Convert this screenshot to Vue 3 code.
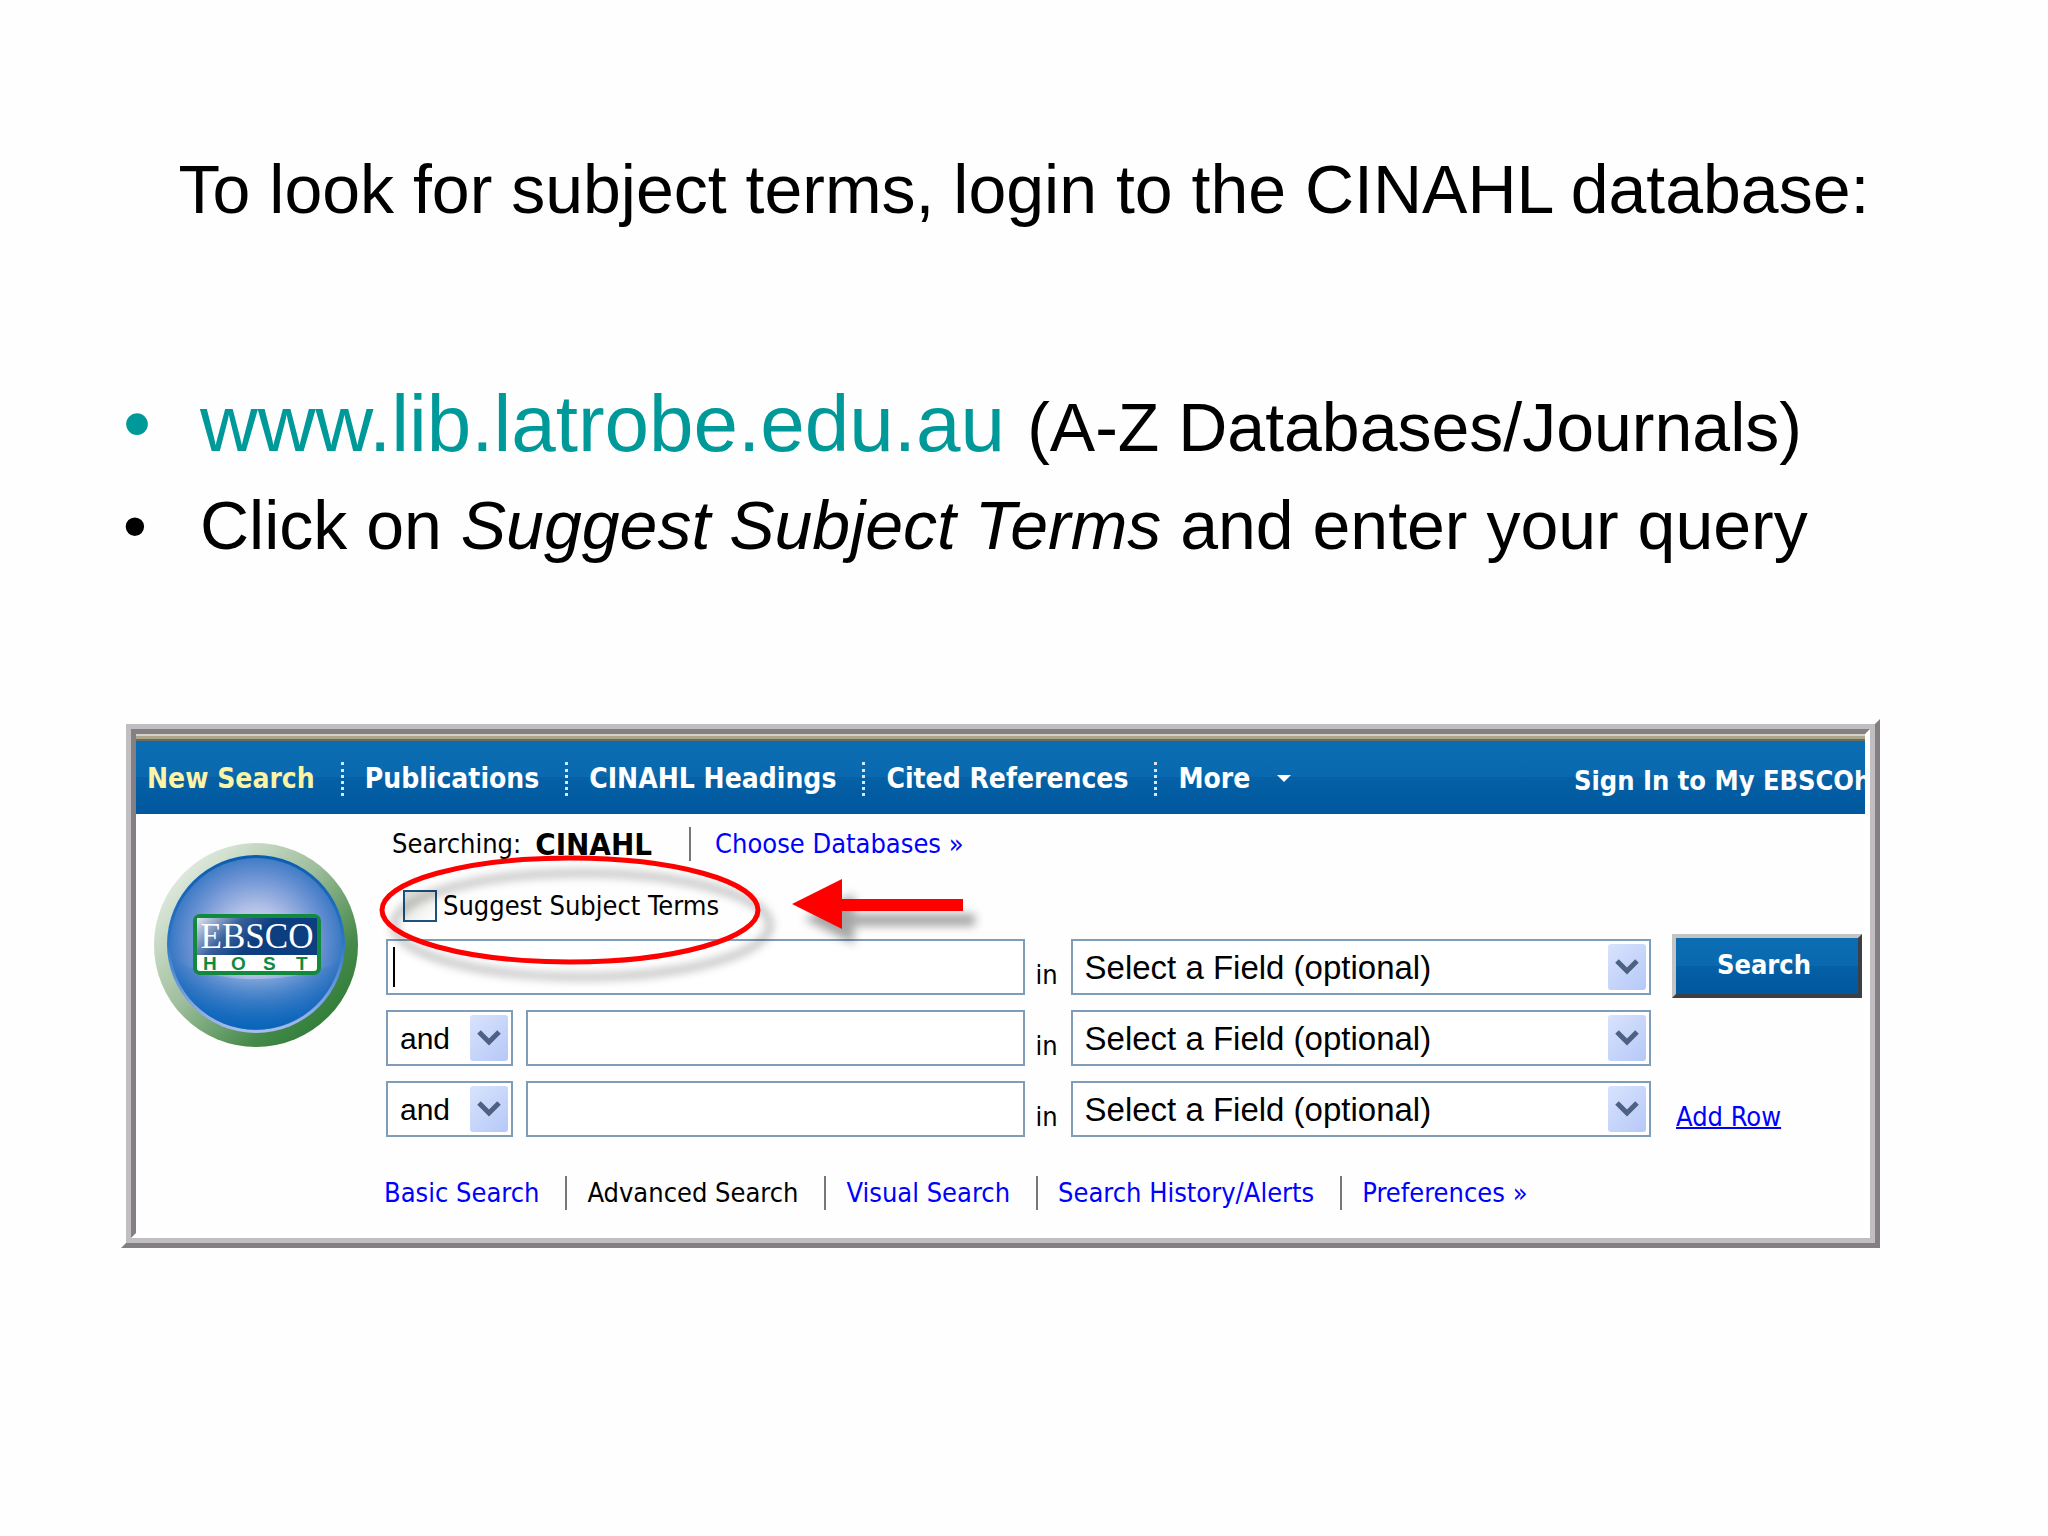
<script setup>
import { ref } from "vue"

const navItems = ["New Search", "Publications", "CINAHL Headings", "Cited References", "More"]

const modes = [
  { title: "Basic Search" },
  { title: "Advanced Search", current: true },
  { title: "Visual Search" },
  { title: "Search History/Alerts" },
  { title: "Preferences »" },
]

const suggest = ref(false)

const rows = ref([
  { id: 1, op: null, term: "", field: "" },
  { id: 2, op: "and", term: "", field: "" },
  { id: 3, op: "and", term: "", field: "" },
])
</script>

<template>
  <main class="slide">
    <h1 class="title">To look for subject terms, login to the CINAHL database:</h1>

    <ul class="points">
      <li class="point point-link">
        <span class="bullet">•</span>
        <span><a href="#">www.lib.latrobe.edu.au</a> <small>(A-Z Databases/Journals)</small></span>
      </li>
      <li class="point">
        <span class="bullet">•</span>
        <span>Click on <em>Suggest Subject Terms</em> and enter your query</span>
      </li>
    </ul>

    <!-- Bevelled frame: three nested borders -->
    <div class="frame-outer">
      <div class="frame-mid">
        <section class="frame-inner">
          <div class="chrome-edge"></div>
          <nav class="topbar">
            <template v-for="(item, i) in navItems" :key="item">
              <span v-if="i > 0" class="dots" aria-hidden="true"></span>
              <a href="#" :class="{ active: i === 0 }">{{ item }}</a>
            </template>
            <span class="more-arrow" aria-hidden="true"></span>
            <a href="#" class="sign-in">Sign In to My EBSCOhost</a>
          </nav>

          <div class="body">
            <div class="logo-col">
              <svg class="logo" viewBox="0 0 204 204" role="img" aria-label="EBSCO HOST">
                <defs>
                  <linearGradient id="ring" x1="0.1" y1="0.15" x2="0.85" y2="0.9">
                    <stop offset="0" stop-color="#e2ebe0" />
                    <stop offset="0.45" stop-color="#9dbd9b" />
                    <stop offset="0.8" stop-color="#478a4b" />
                    <stop offset="1" stop-color="#2f7d37" />
                  </linearGradient>
                  <linearGradient id="rim" x1="0" y1="0" x2="0" y2="1">
                    <stop offset="0" stop-color="#0a5cb0" />
                    <stop offset="0.5" stop-color="#2f76c8" />
                    <stop offset="1" stop-color="#a9bdf0" />
                  </linearGradient>
                  <radialGradient id="ball" cx="0.5" cy="0.48" r="0.54">
                    <stop offset="0" stop-color="#e4e6f6" />
                    <stop offset="0.35" stop-color="#b4c1e7" />
                    <stop offset="0.7" stop-color="#6a92d3" />
                    <stop offset="1" stop-color="#2a70bf" />
                  </radialGradient>
                  <linearGradient id="plate" x1="0" y1="0" x2="1" y2="0.3">
                    <stop offset="0" stop-color="#e3e7f1" />
                    <stop offset="0.35" stop-color="#38609c" />
                    <stop offset="0.6" stop-color="#0d3f80" />
                  </linearGradient>
                  <linearGradient id="shade" x1="0" y1="0" x2="0" y2="1">
                    <stop offset="0" stop-color="#0062b8" stop-opacity="0" />
                    <stop offset="1" stop-color="#0062b8" stop-opacity="0.85" />
                  </linearGradient>
                </defs>
                <circle cx="102" cy="102" r="102" fill="url(#ring)" />
                <circle cx="102" cy="101" r="89" fill="url(#rim)" />
                <circle cx="102" cy="101" r="86" fill="url(#ball)" />
                <path d="M17 115 Q60 138 102 136 Q150 136 186 118 A86 86 0 0 1 17 115Z" fill="url(#shade)" />
                <rect x="41" y="73" width="124" height="57" rx="5" fill="#fff" stroke="#128a3e" stroke-width="4" />
                <rect x="43" y="75" width="120" height="37" fill="url(#plate)" />
                <text x="103" y="105" class="logo-top">EBSCO</text>
                <text x="49 77 109 142" y="127" class="logo-bottom">HOST</text>
              </svg>
            </div>

            <form class="main" @submit.prevent>
              <div class="searching">
                <span>Searching:</span>
                <strong>CINAHL</strong>
                <span class="bar" aria-hidden="true"></span>
                <a href="#">Choose Databases »</a>
              </div>

              <div class="suggest">
                <input id="suggest" v-model="suggest" type="checkbox" />
                <label for="suggest">Suggest Subject Terms</label>
                <!-- Red callout over the checkbox -->
                <svg class="callout" viewBox="0 0 640 150" aria-hidden="true">
                  <ellipse cx="200" cy="64" rx="188" ry="52" fill="none" stroke="#f00" stroke-width="5" />
                  <path d="M422 58 L472 33 V53 H593 V65 H472 V83 Z" fill="#f00" />
                </svg>
              </div>

              <div v-for="(row, i) in rows" :key="row.id" class="row">
                <div class="query">
                  <div v-if="row.op" class="select-box op">
                    <select v-model="row.op" :aria-label="`Operator ${row.id}`">
                      <option>and</option>
                      <option>or</option>
                      <option>not</option>
                    </select>
                    <span class="arrow" aria-hidden="true">
                      <svg viewBox="0 0 24 16"><path d="M2 2 L12 12 L22 2" /></svg>
                    </span>
                  </div>
                  <div class="term">
                    <input v-model="row.term" type="text" :aria-label="`Search term ${row.id}`" />
                    <span v-if="i === 0" class="caret" aria-hidden="true"></span>
                  </div>
                </div>

                <label class="in" :for="`field-${row.id}`">in</label>

                <div class="select-box field">
                  <select :id="`field-${row.id}`" v-model="row.field">
                    <option value="">Select a Field (optional)</option>
                    <option value="TX">TX All Text</option>
                    <option value="AU">AU Author</option>
                  </select>
                  <span class="arrow" aria-hidden="true">
                    <svg viewBox="0 0 24 16"><path d="M2 2 L12 12 L22 2" /></svg>
                  </span>
                </div>

                <button v-if="i === 0" type="submit" class="search-btn">Search</button>
                <a v-if="i === 2" href="#" class="add-row">Add Row</a>
              </div>

              <div class="modes">
                <template v-for="(mode, i) in modes" :key="mode.title">
                  <span v-if="i > 0" class="bar" aria-hidden="true"></span>
                  <span v-if="mode.current">{{ mode.title }}</span>
                  <a v-else href="#">{{ mode.title }}</a>
                </template>
              </div>
            </form>
          </div>
        </section>
      </div>
    </div>
  </main>
</template>

<style>
body {
  background: #fefefe;
}
</style>

<style scoped>
.slide {
  padding: 149px 168px 100px 121px;
  font-family: "Liberation Sans", Arial, sans-serif;
  color: #000;
}

/* ============ Heading and bullets ============ */
.title {
  margin: 0 -80px 0 -33px;
  font-size: 68px;
  line-height: 80px;
  font-weight: 400;
  text-align: center;
}

.points {
  list-style: none;
  margin: 147px 0 0;
  padding: 0;
  display: flex;
  flex-direction: column;
  gap: 2px;
}

.point {
  display: flex;
  font-size: 68px;
  line-height: 96px;
  white-space: nowrap;
}

.point-link {
  font-size: 80px;
}

.point-link .bullet,
.point-link a {
  color: #099;
  text-decoration: none;
}

.point small {
  font-size: 68px;
}

.bullet {
  box-sizing: border-box;
  width: 79px;
  padding-left: 2px;
  flex: none;
}

/* ============ Frame ============ */
.frame-outer {
  margin-top: 146px;
  border: 5px solid;
  border-color: transparent #837f82 #837f82 transparent;
}

.frame-mid {
  border: 5px solid #c0bec0;
}

.frame-inner {
  border: 5px solid;
  border-color: #837f82 #fff #fff #837f82;
  background: #fefefe;
  font-family: "DejaVu Sans Condensed", "DejaVu Sans", sans-serif;
  font-size: 27px;
  line-height: 34px;
}

.chrome-edge {
  height: 7px;
  background: linear-gradient(#d6d2c8 0 2px, #aca68f 2px 5px, #6d6a58 5px);
}

/* ============ Top bar ============ */
.topbar {
  box-sizing: border-box;
  height: 73px;
  padding: 2px 0 0 11px;
  display: flex;
  align-items: center;
  overflow: hidden;
  background: linear-gradient(#0c6db2, #0a69ae 50%, #0560a6 50%, #00589e);
  font-size: 28px;
  font-weight: 700;
  white-space: nowrap;
}

.topbar a {
  flex: none;
  color: #fff;
  text-decoration: none;
}

.topbar a.active {
  color: #fbf3a5;
}

.dots {
  flex: none;
  height: 34px;
  margin: 0 21px 0 26px;
  border-left: 3px dotted #d5e6f4;
}

.more-arrow {
  margin-left: 27px;
  border: 7px solid transparent;
  border-top-color: #fff;
  border-bottom: 0;
}

.topbar .sign-in {
  width: 291px;
  margin-left: auto;
  padding-top: 4px;
  font-size: 27px;
}

/* ============ Search form ============ */
.body {
  display: flex;
  padding: 11px 0 23px;
}

.body a {
  color: #00f;
  text-decoration: none;
}

.logo-col {
  width: 250px;
  flex: none;
  padding: 18px 0 0 18px;
  box-sizing: border-box;
}

.logo {
  display: block;
  width: 204px;
}

.logo-top {
  fill: #fff;
  font-family: "Liberation Serif", serif;
  font-size: 35px;
  text-anchor: middle;
}

.logo-bottom {
  fill: #128a3e;
  font-family: "Liberation Sans", Arial, sans-serif;
  font-size: 19px;
  font-weight: 700;
}

.main {
  flex: 1;
  min-width: 0;
  display: flex;
  flex-direction: column;
  gap: 15px;
}

.searching {
  display: flex;
  align-items: center;
  height: 38px;
  padding-left: 6px;
}

.searching strong {
  margin: 0 11px 0 14px;
  font-size: 31px;
}

.searching a {
  margin-left: 4px;
}

.bar {
  flex: none;
  width: 2px;
  height: 34px;
  margin: 0 20px 0 26px;
  background: #777;
}

.suggest {
  position: relative;
  display: flex;
  align-items: center;
  gap: 6px;
  margin: 12px 0 2px;
  padding-left: 17px;
  height: 32px;
}

.suggest input {
  appearance: none;
  width: 34px;
  height: 32px;
  margin: 0;
  border: 2px solid #1c5180;
  background: linear-gradient(135deg, #dcdcd7, #fff);
}

.callout {
  position: absolute;
  left: -16px;
  top: -44px;
  width: 640px;
  height: 150px;
  z-index: 1;
  pointer-events: none;
  filter: drop-shadow(12px 15px 5px rgba(0, 0, 0, 0.35));
}

.row {
  display: grid;
  grid-template-columns: 638fr 46px 580fr 214px;
  height: 56px;
}

.query {
  display: flex;
  gap: 13px;
}

.term {
  position: relative;
  flex: 1;
}

.term input,
.select-box select {
  display: block;
  width: 100%;
  height: 56px;
  box-sizing: border-box;
  margin: 0;
  border: 2px solid #7f9db9;
  border-radius: 0;
  background: #fff;
  color: #000;
  font-family: "Liberation Sans", Arial, sans-serif;
  font-size: 33px;
  outline: none;
}

.term input {
  padding: 0 8px;
}

.caret {
  position: absolute;
  left: 7px;
  top: 8px;
  width: 2px;
  height: 40px;
  background: #000;
}

.select-box {
  position: relative;
}

.select-box select {
  appearance: none;
  padding: 0 40px 0 12px;
}

.op {
  width: 127px;
}

.op select {
  font-size: 30px;
}

.arrow {
  position: absolute;
  top: 5px;
  right: 5px;
  width: 38px;
  height: 46px;
  border-radius: 3px;
  display: flex;
  align-items: center;
  justify-content: center;
  background: linear-gradient(135deg, #d9e3fd, #b5c8f7);
  pointer-events: none;
}

.arrow svg {
  width: 24px;
  height: 16px;
  fill: none;
  stroke: #4d6185;
  stroke-width: 5;
}

.in {
  padding: 17px 0 0 11px;
  line-height: 38px;
}

.search-btn {
  height: 64px;
  margin: -5px 3px 0 21px;
  padding: 0 6px 2px 0;
  border: 4px solid;
  border-color: #c5c3c3 #3c3f45 #3c3f45 #c5c3c3;
  background: linear-gradient(#0c6db2, #0a69ae 50%, #0560a6 50%, #00589e);
  color: #fff;
  font: inherit;
  font-weight: 700;
}

.body .add-row {
  justify-self: start;
  margin-left: 25px;
  padding-top: 17px;
  line-height: 38px;
  text-decoration: underline;
  text-decoration-thickness: 2px;
}

.modes {
  display: flex;
  align-items: center;
  margin: 24px 0 0 -2px;
  height: 34px;
  white-space: nowrap;
}
</style>
